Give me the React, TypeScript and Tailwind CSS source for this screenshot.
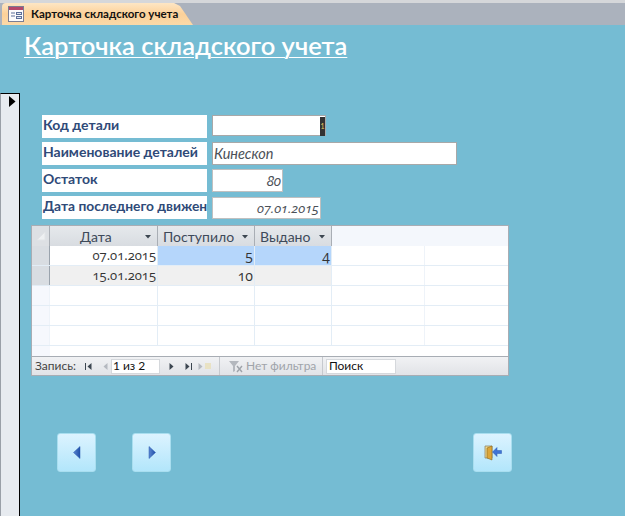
const font = "font-['Lato','Noto_Sans',sans-serif]";
const nums = "font-['Open_Sans','Lato',sans-serif] oldstyle-nums";

function NavArrow({ dir, muted, bar }: { dir: "l" | "r"; muted?: boolean; bar?: boolean }) {
  const fill = muted ? "#b5b9c0" : "#3c4650";
  return (
    <svg width={bar ? 7 : 5} height="7" viewBox={bar ? "0 0 7 7" : "0 0 5 7"} className="shrink-0">
      {bar && dir === "l" && (
        <>
          <rect x="0" y="0" width="1" height="7" fill={fill} />
          <path d="M6.5 0L2.5 3.5L6.5 7Z" fill={fill} />
        </>
      )}
      {bar && dir === "r" && (
        <>
          <path d="M0.5 0L4.5 3.5L0.5 7Z" fill={fill} />
          <rect x="6" y="0" width="1" height="7" fill={fill} />
        </>
      )}
      {!bar && <path d={dir === "l" ? "M4.5 0L0.5 3.5L4.5 7Z" : "M0.5 0L4.5 3.5L0.5 7Z"} fill={fill} />}
    </svg>
  );
}

function BigButton({ children, className }: { children: React.ReactNode; className?: string }) {
  return (
    <div className={`flex h-[39px] w-[39px] items-center justify-center rounded-[3px] border border-[#a9deef] bg-gradient-to-b from-[#dcf3ff] to-[#b2e6fb] ${className ?? ""}`}>
      {children}
    </div>
  );
}

function Blue({ d }: { d: string }) {
  return (
    <svg width="8" height="13" viewBox="0 0 8 13">
      <defs>
        <linearGradient id="arr" x1="0" y1="0" x2="1" y2="0">
          <stop offset="0" stopColor="#5b86d0" />
          <stop offset="1" stopColor="#1f4fa8" />
        </linearGradient>
      </defs>
      <path d={d} fill="url(#arr)" stroke="#2a5bb0" strokeWidth="0.5" />
    </svg>
  );
}

function Field({ label, children, mb = "mb-[4px]", size = "text-[14px]" }: { label: string; children: React.ReactNode; mb?: string; size?: string }) {
  return (
    <div className={`flex items-start gap-[5px] ${mb}`}>
      <div className={`h-[23px] w-[165px] shrink-0 overflow-hidden whitespace-nowrap bg-white pl-[1px] ${size} leading-[19px] font-bold text-[#2f4a78]`}>
        {label}
      </div>
      {children}
    </div>
  );
}

const cellBase = "flex items-center justify-end pr-[1px] border-r border-[#e3edf6]";

function Row({ date, a, b, alt, selected }: { date?: string; a?: string; b?: string; alt?: boolean; selected?: boolean }) {
  const bg = alt ? "bg-[#f0f0f0]" : "bg-white";
  return (
    <div className="flex h-[20px] border-b border-[#e3edf6]">
      <div className={`w-[18px] shrink-0 border-r ${date ? "border-r-[#9aa3ad] bg-[#d9dde2]" : "border-r-[#eef3f9] bg-[#f6f8fd]"}`} />
      <div className={`${cellBase} w-[108px] text-[13px] ${nums} text-[#333] ${bg}`}>{date}</div>
      <div className={`${cellBase} w-[97px] text-[14px] ${nums} text-[#333] ${selected ? "bg-[#b5d6fb]" : bg}`}>{a}</div>
      <div className={`${cellBase} w-[77px] text-[14px] ${nums} text-[#333] ${selected ? "bg-[#b5d6fb]" : bg}`}>{b}</div>
      <div className="w-[93px] border-r border-[#eef3f9] bg-white" />
      <div className="flex-1 bg-white" />
    </div>
  );
}

function Head({ text, w }: { text: string; w: string }) {
  return (
    <div className={`flex ${w} items-center justify-between border-r border-[#a9aeb5] bg-gradient-to-b from-[#e6e9ec] to-[#d8dce1] px-[5px] text-[14px] text-[#3e4a5a]`}>
      <span className={text === "Дата" ? "ml-[25px]" : ""}>{text}</span>
      <svg width="6" height="4" viewBox="0 0 6 4" className="mr-[1px] mt-[2px] shrink-0">
        <path d="M0 0H6L3 3.5Z" fill="#3c4650" />
      </svg>
    </div>
  );
}

export default function App() {
  return (
    <div className={`flex h-[516px] w-[625px] flex-col overflow-hidden bg-[#75bcd3] ${font}`}>
      <div className="h-[25px] shrink-0 border-t-[3px] border-t-[#d5d7da] bg-[#abb2bd] pl-[2px]">
        <div className="flex h-[22px] w-[191px] items-center rounded-tl-[4px] bg-gradient-to-b from-[#fde6c4] via-[#fcd199] to-[#fbd9a8] pl-[6px] [clip-path:polygon(0_0,172px_0,178px_3px,191px_22px,0_22px)]">
          <svg width="16" height="16" viewBox="0 0 16 16" className="shrink-0">
            <rect x="0.5" y="0.5" width="15" height="15" fill="#fbfbfd" stroke="#7b7d92" />
            <rect x="1" y="1" width="14" height="3" fill="#b5476b" />
            <path d="M3 7H7M3 10H7" stroke="#5c6f9a" strokeWidth="1" />
            <rect x="8.5" y="6.5" width="5" height="2" fill="#dfe6f2" stroke="#5c6f9a" />
            <rect x="8.5" y="10.5" width="5" height="2" fill="#dfe6f2" stroke="#5c6f9a" />
          </svg>
          <span className="ml-[7px] whitespace-nowrap text-[11.5px] font-bold text-[#111]">Карточка складского учета</span>
        </div>
      </div>

      <div className="flex h-[68px] shrink-0 items-start pl-[24px] pt-[4px]">
        <span className="text-[25.5px] leading-[33px] font-semibold text-white underline decoration-[1px] underline-offset-[2px] whitespace-nowrap">
          Карточка складского учета
        </span>
      </div>

      <div className="flex flex-1 min-h-0">
        <div className="flex w-[20px] shrink-0 items-start border-t border-r border-black bg-[#e7ebf0] border-l-[1px] border-l-[#9aa0a8] pl-[8px] pt-[2px]">
          <svg width="7" height="11" viewBox="0 0 7 11">
            <path d="M0 0L6.5 5.5L0 11Z" fill="#000" />
          </svg>
        </div>

        <div className="flex-1 pt-[22px]">
          <div className="pl-[22px]">
            <Field label="Код детали">
              <div className="flex h-[21px] w-[114px] justify-end border border-[#a8a8a8] bg-white">
                <div className="mt-[1px] flex h-[19px] w-[5px] items-center justify-center bg-[#333] text-[7px] leading-none text-[#e8c860]">1</div>
              </div>
            </Field>
            <Field label="Наименование деталей">
              <div className="flex h-[23px] w-[245px] items-center border border-[#a8a8a8] bg-white pl-[1px] text-[14.5px] italic text-[#4b5057]">Кинескоп</div>
            </Field>
            <Field label="Остаток">
              <div className={`flex h-[23px] w-[71px] items-center justify-end border border-[#c0c0c0] bg-white pr-[1px] text-[14px] italic ${nums} text-[#4b5057]`}>80</div>
            </Field>
            <Field label="Дата последнего движен" mb="mb-[6px]" size="text-[13.8px]">
              <div className={`mt-[1px] flex h-[22px] w-[109px] items-center justify-end border border-[#c0c0c0] bg-white pr-[1px] text-[13.5px] italic ${nums} text-[#4b5057]`}>07.01.2015</div>
            </Field>
          </div>

          <div className="ml-[11px] w-[478px] border border-[#a8adb4] bg-white">
            <div className="flex h-[20px]">
              <div className="flex w-[18px] shrink-0 items-center justify-center border-r border-[#a9aeb5] bg-[#dde0e4]">
                <svg width="10" height="10" viewBox="0 0 10 10"><path d="M9 1V9H1Z" fill="#eef0f2" stroke="#e2e4e7" /></svg>
              </div>
              <Head text="Дата" w="w-[108px]" />
              <Head text="Поступило" w="w-[97px]" />
              <Head text="Выдано" w="w-[77px]" />
              <div className="flex-1 bg-[#f4f7fc]" />
            </div>
            <Row date="07.01.2015" a="5" b="4" selected />
            <Row date="15.01.2015" a="10" alt />
            <Row />
            <Row />
            <Row />
            <div className="flex h-[10px]">
              <div className="w-[18px] shrink-0 bg-[#f6f8fd]" />
              <div className="flex-1 bg-white" />
            </div>
            <div className="flex h-[19px] items-center border-t border-[#a8adb4] bg-gradient-to-b from-[#f1f2f4] to-[#e1e3e7] pl-[3px] text-[12px] text-[#444]">
              <span className="mr-[9px]">Запись:</span>
              <NavArrow dir="l" bar />
              <span className="ml-[11px]"><NavArrow dir="l" muted /></span>
              <div className="ml-[3px] flex h-[15px] w-[49px] items-center border border-[#d5d8dc] bg-white pl-[1px] text-[#111]">1 из 2</div>
              <span className="ml-[9px]"><NavArrow dir="r" /></span>
              <span className="ml-[11px]"><NavArrow dir="r" bar /></span>
              <span className="ml-[6px]"><NavArrow dir="r" muted /></span>
              <span className="ml-[2px] mr-[8px] h-[6px] w-[6px] bg-[#e9e2c4]" />
              <div className="h-full w-px bg-[#c6c9ce]" />
              <svg width="14" height="13" viewBox="0 0 14 13" className="ml-[9px]">
                <path d="M0 1H10L6 6V11L4 12V6Z" fill="#b4b8be" />
                <path d="M8 6L13 12M13 6L8 12" stroke="#9ea3a9" strokeWidth="1.4" />
              </svg>
              <span className="ml-[3px] w-[72px] whitespace-nowrap text-[12px] text-[#a0a4aa]">Нет фильтра</span>
              <div className="ml-[4px] h-full w-px bg-[#c6c9ce]" />
              <div className="ml-[3px] flex h-[15px] w-[70px] items-center border border-[#d5d8dc] bg-white pl-[2px] text-[#111]">Поиск</div>
            </div>
          </div>

          <div className="mt-[57px] flex pl-[37px]">
            <BigButton>
              <Blue d="M7 0.5V12.5L0.5 6.5Z" />
            </BigButton>
            <BigButton className="ml-[36px]">
              <Blue d="M1 0.5V12.5L7.5 6.5Z" />
            </BigButton>
            <BigButton className="ml-[302px]">
              <svg width="18" height="18" viewBox="0 0 18 18">
                <path d="M1 2H8V14H1Z" fill="#f1d98a" stroke="#8d8770" strokeWidth="0.8" />
                <path d="M3 4L8 2V16L3 14Z" fill="#dca63a" stroke="#8b6a1e" strokeWidth="0.6" />
                <path d="M17.5 6.5H13V3.5L8.5 8L13 12.5V9.5H17.5Z" fill="#3f74d6" stroke="#2a58b0" strokeWidth="0.5" />
              </svg>
            </BigButton>
          </div>
        </div>
      </div>
    </div>
  );
}
